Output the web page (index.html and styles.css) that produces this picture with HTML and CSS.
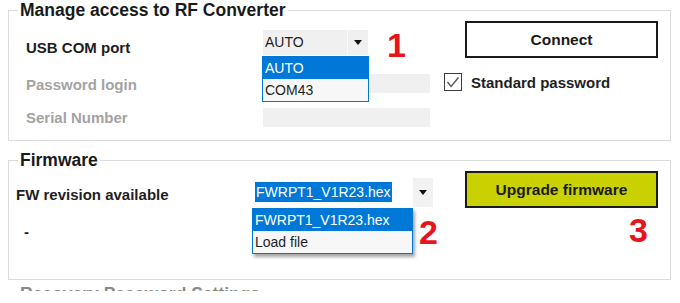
FILE: index.html
```html
<!DOCTYPE html>
<html lang="en">
<head>
    <meta charset="UTF-8">
    <meta name="viewport" content="width=device-width, initial-scale=1.0">
    <title>RF Converter</title>
    <link rel="stylesheet" href="styles.css">
</head>
<body>
    <fieldset class="group">
        <legend>Manage access to RF Converter</legend>
        <div class="group-body access">
            <div class="form">
                <div class="row row-port">
                    <span class="label">USB COM port</span>
                    <div class="combo port">
                        <span class="combo-value">AUTO</span>
                        <span class="combo-arrow">
                            <svg width="8" height="5" viewBox="0 0 8 5"><path d="M0 0h8L4 5z" fill="#111"/></svg>
                        </span>
                        <ul class="droplist">
                            <li class="selected">AUTO</li>
                            <li>COM43</li>
                        </ul>
                    </div>
                    <span class="step step-1">1</span>
                </div>
                <div class="row row-pass">
                    <span class="label disabled">Password login</span>
                    <div class="textbox"></div>
                </div>
                <div class="row row-serial">
                    <span class="label disabled">Serial Number</span>
                    <div class="textbox"></div>
                </div>
            </div>
            <div class="side">
                <button class="btn connect">Connect</button>
                <label class="check">
                    <svg width="18" height="18" viewBox="0 0 18 18">
                        <rect x="0.5" y="0.5" width="17" height="17" fill="#fff" stroke="#3c3c3c"/>
                        <path d="M3.5 9l3.5 4.5 7.5-9" fill="none" stroke="#555" stroke-width="1.4"/>
                    </svg>
                    <span>Standard password</span>
                </label>
            </div>
        </div>
    </fieldset>

    <fieldset class="group firmware">
        <legend>Firmware</legend>
        <div class="group-body fw">
            <div class="form">
                <div class="row row-fw">
                    <span class="label wide">FW revision available</span>
                    <div class="combo file">
                        <span class="combo-value"><span class="sel">FWRPT1_V1R23.hex</span></span>
                        <span class="combo-arrow">
                            <svg width="8" height="5" viewBox="0 0 8 5"><path d="M0 0h8L4 5z" fill="#111"/></svg>
                        </span>
                        <ul class="droplist shadow">
                            <li class="selected">FWRPT1_V1R23.hex</li>
                            <li>Load file</li>
                        </ul>
                        <span class="step step-2">2</span>
                    </div>
                </div>
                <div class="fw-status">-</div>
            </div>
            <div class="side">
                <button class="btn upgrade">Upgrade firmware</button>
                <span class="step step-3">3</span>
            </div>
        </div>
    </fieldset>

    <div class="next">
        <span>Recovery Password Settings</span>
    </div>
</body>
</html>
```

FILE: styles.css
```css
body {
    margin: 0;
    width: 680px;
    height: 303px;
    overflow: hidden;
    background: #fff;
    color: #1e1e1e;
    font-family: "Liberation Sans", Arial, sans-serif;
    font-size: 14px;
}
.group {
    margin: 0 9px 0 8px;
    padding: 0;
    min-width: 0;
    border: 1px solid #dcdcdc;
}
.group legend {
    margin-left: 9px;
    padding: 0 2px;
    font-size: 17.5px;
    font-weight: bold;
    line-height: 20px;
    color: #1a1a1a;
}
.group.firmware {
    margin-top: 9px;
}
.group-body {
    display: flex;
}
.group-body.access {
    height: 120px;
}
.group-body.fw {
    height: 109px;
}
.form {
    width: 435px;
}
.access .form {
    padding-left: 17px;
    width: 418px;
}
.fw .form {
    padding-left: 7px;
    width: 428px;
}
.row {
    display: flex;
    align-items: flex-start;
}
.label {
    width: 237px;
    flex: none;
    font-size: 15px;
    font-weight: bold;
    line-height: 20px;
}
.label.wide {
    width: 239px;
}
.label.disabled {
    color: #a3a3a3;
}
.row-port {
    margin-top: 10px;
    height: 25px;
}
.row-port .label {
    margin-top: 8px;
}
.row-pass {
    margin-top: 19px;
    height: 19px;
}
.row-pass .label {
    margin-top: 1px;
}
.row-serial {
    margin-top: 15px;
    height: 19px;
}
.textbox {
    width: 167px;
    height: 19px;
    background: #f0f0f0;
}

/* combo boxes */
.combo {
    position: relative;
    display: flex;
    flex: none;
}
.combo.port {
    width: 105px;
    height: 25px;
    background: #f0f0f0;
}
.combo.port .combo-value {
    flex: 1;
    padding-left: 2px;
    line-height: 25px;
}
.combo-arrow {
    width: 20px;
    display: flex;
    align-items: center;
    justify-content: center;
    border-left: 1px solid #fafafa;
    background: #f0f0f0;
}
.combo.file {
    width: 178px;
    height: 29px;
}
.combo.file .combo-value {
    flex: 1;
    padding-top: 4px;
}
.combo.file .combo-arrow {
    border-left: none;
    background: #f2f2f2;
}
.sel {
    display: inline-block;
    height: 20px;
    line-height: 20px;
    padding: 0 1px;
    background: #0078d7;
    color: #fff;
}
.row-fw {
    margin-top: 8px;
    height: 29px;
}
.row-fw .label {
    margin-top: 7px;
}

/* open dropdown lists */
.droplist {
    position: absolute;
    margin: 0;
    padding: 0;
    list-style: none;
    background: #f7f7f7;
    border: 1px solid #0078d7;
    z-index: 2;
}
.droplist li {
    height: 22px;
    line-height: 22px;
    padding-left: 2px;
}
.droplist li.selected {
    background: #0078d7;
    color: #fff;
}
.port .droplist {
    left: -1px;
    top: 26px;
    width: 105px;
}
.file .droplist {
    left: -3px;
    top: 30px;
    width: 159px;
}
.droplist.shadow {
    box-shadow: 2px 3px 3px rgba(0, 0, 0, 0.35);
}

/* red step markers */
.step {
    color: #e8141b;
    font-size: 34px;
    font-weight: bold;
    line-height: 34px;
}
.step-1 {
    margin-left: 19px;
    margin-top: -2px;
}
.step-2 {
    position: absolute;
    left: 164px;
    top: 37px;
}
.step-3 {
    display: block;
    margin-top: 5px;
    padding-left: 185px;
}

.fw-status {
    margin-top: 15px;
    padding-left: 8px;
    font-size: 15px;
    font-weight: bold;
    line-height: 20px;
}

/* right column */
.side {
    width: 214px;
}
.btn {
    display: block;
    margin: 1px 0 0 21px;
    width: 193px;
    height: 37px;
    border: 2px solid #1a1a1a;
    font-family: inherit;
    font-size: 15.5px;
    font-weight: bold;
    color: #1a1a1a;
    cursor: pointer;
}
.btn.connect {
    background: #fff;
}
.btn.upgrade {
    background: #c9d200;
}
.check {
    display: flex;
    align-items: center;
    gap: 9px;
    margin-top: 15px;
    font-size: 15px;
    font-weight: bold;
}

.next {
    margin-top: 4px;
    height: 7px;
    overflow: hidden;
    padding-left: 20px;
    font-size: 17.5px;
    font-weight: bold;
    line-height: 20px;
    color: #8a8a8a;
}
```
